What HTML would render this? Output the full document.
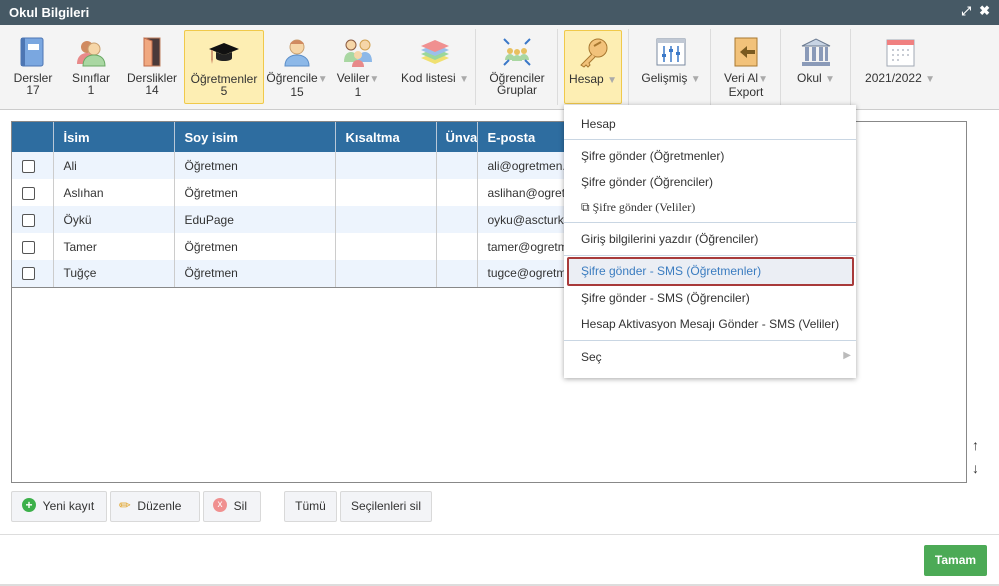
<!DOCTYPE html>
<html><head><meta charset="utf-8"><style>
*{box-sizing:border-box;margin:0;padding:0}
body{width:999px;height:586px;overflow:hidden;background:#fff;font-family:"Liberation Sans",Arial,sans-serif;font-size:12px;color:#333;position:relative}
.a{position:absolute}
.title{left:0;top:0;width:999px;height:25px;background:#465965;color:#fff;font-weight:bold;font-size:13px;padding:5px 0 0 9px}
.tb{left:0;top:25px;width:999px;height:85px;background:#f4f4f4;border-bottom:1px solid #ccc}
.it{position:absolute;top:5px;height:74px;text-align:center;font-size:12px;color:#333;line-height:12px}
.it .lb{position:absolute;top:42px;left:0;right:0}
.it svg{position:absolute;top:6px;left:50%;margin-left:-16px}
.sel{background:#fdeeb3;border:1px solid #f0c94a;border-radius:2px}
.sep{position:absolute;top:4px;width:1px;height:76px;background:#dcdcdc}
.arr{color:#aaa;font-size:10px}
table{border-collapse:collapse;table-layout:fixed}
.grid{left:11px;top:121px;width:956px;height:362px;border:1px solid #888}
th{background:#2e6da0;color:#fff;text-align:left;font-size:13px;height:30px;padding-left:10px;font-weight:bold;border-right:1px solid #b8c8d8;white-space:nowrap;overflow:hidden}
td{height:27px;padding-left:10px;border-right:1px solid #ccc;font-size:12px;color:#333;white-space:nowrap;overflow:hidden}
tr.o td{background:#edf4fd}
.cb{display:inline-block;width:13px;height:13px;border:1px solid #555;border-radius:2px;background:#fff;vertical-align:middle}
.dd{left:564px;top:105px;width:292px;height:273px;background:#fff;box-shadow:0 1px 5px rgba(0,0,0,.35);font-size:12px;color:#333}
.dd .m{position:absolute;left:17px}
.dd .hr{position:absolute;left:0;width:292px;height:1px;background:#c9d6e3}
.btn{position:absolute;top:491px;height:31px;background:#f3f4f7;border:1px solid #d9d9d9;border-radius:2px;font-size:12px;color:#333;line-height:29px}
</style></head><body>
<div class="a title">Okul Bilgileri<span style="position:absolute;right:28px;top:4px;font-size:12px">⤢</span><span style="position:absolute;right:9px;top:3px;font-size:13px">✖</span></div>
<div class="a tb">
 <div class="it" style="left:5px;width:56px"><svg width="32" height="32"><rect x="4" y="2" width="22" height="28" rx="2" fill="#7aa7e0" stroke="#4d76b3"/><rect x="4" y="2" width="4" height="28" fill="#4d76b3"/><rect x="11" y="8" width="11" height="6" fill="#fff"/></svg><div class="lb">Dersler<br>17</div></div>
 <div class="it" style="left:64px;width:54px"><svg width="32" height="32"><circle cx="12" cy="11" r="6" fill="#d08a60"/><path d="M2 28c0-8 5-11 10-11s10 3 10 11z" fill="#e88a8a"/><circle cx="19" cy="13" r="6" fill="#f6d6a8" stroke="#c9a070"/><path d="M8 30c0-8 5-11 11-11s11 3 11 11z" fill="#a9d7a2" stroke="#6aa864"/></svg><div class="lb">Sınıflar<br>1</div></div>
 <div class="it" style="left:122px;width:60px"><svg width="32" height="32"><rect x="8" y="2" width="16" height="28" fill="#4a3a3a" stroke="#c08060"/><path d="M8 2l8 3v25l-8-0z" fill="#f0a880" stroke="#c06b4a"/></svg><div class="lb">Derslikler<br>14</div></div>
 <div class="it sel" style="left:184px;top:5px;width:80px"><svg width="32" height="32"><path d="M1 12l15-6 15 6-15 6z" fill="#111"/><path d="M8 15v6c0 2 4 3 8 3s8-1 8-3v-6l-8 3z" fill="#222"/><path d="M4 13v9" stroke="#c08060" stroke-width="1.5"/><path d="M3 22l1 5 1-5z" fill="#d08c6a"/></svg><div class="lb">Öğretmenler<br>5</div></div>
 <div class="it" style="left:266px;width:62px"><svg width="32" height="32"><circle cx="16" cy="11" r="7" fill="#f6d6a8" stroke="#c9a070"/><path d="M9 8c2-5 12-5 14 0" fill="#d08a60"/><path d="M4 30c0-8 6-11 12-11s12 3 12 11z" fill="#8cb8e8" stroke="#5b8ec8"/></svg><div class="lb">Öğrencile<span class="arr">▼</span><br>15</div></div>
 <div class="it" style="left:334px;width:48px"><svg width="32" height="32"><circle cx="9" cy="9" r="5" fill="#f6d6a8" stroke="#8a5a40"/><path d="M2 26c0-7 3-10 7-10s7 3 7 10z" fill="#a9d7a2"/><circle cx="23" cy="9" r="5" fill="#f6d6a8" stroke="#d0a050"/><path d="M16 26c0-7 3-10 7-10s7 3 7 10z" fill="#8cb8e8"/><circle cx="16" cy="19" r="4" fill="#f6d6a8"/><path d="M10 31c0-5 3-7 6-7s6 2 6 7z" fill="#e88a8a"/></svg><div class="lb">Veliler<span class="arr">▼</span><br>1</div></div>
 <div class="it" style="left:395px;width:80px"><svg width="32" height="32"><path d="M2 22l14 6 14-6-14-6z" fill="#f0e070"/><path d="M2 18l14 6 14-6-14-6z" fill="#9bd79b"/><path d="M2 14l14 6 14-6-14-6z" fill="#9ac0ea"/><path d="M2 10l14 6 14-6-14-6z" fill="#f09090"/></svg><div class="lb">Kod listesi <span class="arr">▼</span></div></div>
 <div class="sep" style="left:475px"></div>
 <div class="it" style="left:480px;width:74px"><svg width="32" height="32"><circle cx="9" cy="15" r="3" fill="#e8c060"/><circle cx="16" cy="16" r="3" fill="#e8c060"/><circle cx="23" cy="15" r="3" fill="#e8c060"/><path d="M4 24c0-4 3-6 5-6s5 2 5 6zM11 25c0-4 3-6 5-6s5 2 5 6zM18 24c0-4 3-6 5-6s5 2 5 6z" fill="#a9d7a2"/><path d="M3 3l5 5M29 3l-5 5M3 29l5-5M29 29l-5-5" stroke="#3a78c8" stroke-width="2"/></svg><div class="lb">Öğrenciler<br>Gruplar</div></div>
 <div class="sep" style="left:557px"></div>
 <div class="it sel" style="left:564px;width:58px"><svg width="32" height="32"><circle cx="21" cy="11" r="9" fill="#f2c27a" stroke="#a87830"/><path d="M15 17L4 28l3 2 2-2 2 2 2-2-1-2 6-6" fill="#f2c27a" stroke="#a87830"/><path d="M17 9l7-4" stroke="#a87830" stroke-width="2"/></svg><div class="lb">Hesap <span class="arr">▼</span></div></div>
 <div class="sep" style="left:628px"></div>
 <div class="it" style="left:636px;width:70px"><svg width="32" height="32"><rect x="2" y="3" width="28" height="26" fill="#fff" stroke="#7a8aa0"/><rect x="2" y="3" width="28" height="4" fill="#c0c8d4"/><path d="M9 10v16M16 10v16M23 10v16" stroke="#3a78c8" stroke-width="1.5"/><rect x="7" y="18" width="4" height="3" fill="#3a78c8"/><rect x="14" y="13" width="4" height="3" fill="#3a78c8"/><rect x="21" y="16" width="4" height="3" fill="#3a78c8"/></svg><div class="lb">Gelişmiş <span class="arr">▼</span></div></div>
 <div class="sep" style="left:710px"></div>
 <div class="it" style="left:716px;width:60px"><svg width="32" height="32"><rect x="5" y="2" width="22" height="28" fill="#f2c27a" stroke="#a87830"/><path d="M10 16l7-6v4h8v4h-8v4z" fill="#7a5a20"/></svg><div class="lb">Veri Al<span class="arr">▼</span><br>Export</div></div>
 <div class="sep" style="left:780px"></div>
 <div class="it" style="left:786px;width:60px"><svg width="32" height="32"><path d="M2 10L16 3l14 7z" fill="#c8d4e4" stroke="#6a7a90"/><rect x="5" y="11" width="4" height="14" fill="#8a9ab8"/><rect x="12" y="11" width="4" height="14" fill="#8a9ab8"/><rect x="19" y="11" width="4" height="14" fill="#8a9ab8"/><rect x="25" y="11" width="3" height="14" fill="#8a9ab8"/><rect x="2" y="26" width="28" height="4" fill="#8a9ab8"/></svg><div class="lb">Okul <span class="arr">▼</span></div></div>
 <div class="sep" style="left:850px"></div>
 <div class="it" style="left:858px;width:84px"><svg width="32" height="32"><rect x="3" y="4" width="27" height="26" fill="#fff" stroke="#a0a8b4"/><rect x="3" y="4" width="27" height="5" fill="#f08080"/><g fill="#c8ccd4"><rect x="8" y="13" width="2" height="2"/><rect x="13" y="13" width="2" height="2"/><rect x="18" y="13" width="2" height="2"/><rect x="23" y="13" width="2" height="2"/><rect x="8" y="18" width="2" height="2"/><rect x="13" y="18" width="2" height="2"/><rect x="18" y="18" width="2" height="2"/><rect x="23" y="18" width="2" height="2"/><rect x="8" y="23" width="2" height="2"/><rect x="13" y="23" width="2" height="2"/></g></svg><div class="lb">2021/2022 <span class="arr">▼</span></div></div>
</div>
<div class="a grid">
<table style="width:615px"><tr><th style="width:41px"></th><th style="width:121px">İsim</th><th style="width:161px">Soy isim</th><th style="width:101px">Kısaltma</th><th style="width:41px;padding-left:9px">Ünvan</th><th>E-posta</th></tr>
<tr class="o"><td><span class="cb"></span></td><td>Ali</td><td>Öğretmen</td><td></td><td></td><td>ali@ogretmen...</td></tr>
<tr><td><span class="cb"></span></td><td>Aslıhan</td><td>Öğretmen</td><td></td><td></td><td>aslihan@ogretmen</td></tr>
<tr class="o"><td><span class="cb"></span></td><td>Öykü</td><td>EduPage</td><td></td><td></td><td>oyku@ascturkiye</td></tr>
<tr><td><span class="cb"></span></td><td>Tamer</td><td>Öğretmen</td><td></td><td></td><td>tamer@ogretmen</td></tr>
<tr class="o"><td style="border-bottom:1px solid #888"><span class="cb"></span></td><td style="border-bottom:1px solid #888">Tuğçe</td><td style="border-bottom:1px solid #888">Öğretmen</td><td style="border-bottom:1px solid #888"></td><td style="border-bottom:1px solid #888"></td><td style="border-bottom:1px solid #888">tugce@ogretmen</td></tr>
</table></div>
<div class="a" style="left:972px;top:437px;font-size:14px;font-weight:bold">↑</div>
<div class="a" style="left:972px;top:460px;font-size:14px;font-weight:bold">↓</div>
<div class="a dd">
 <div class="m" style="top:12px">Hesap</div>
 <div class="hr" style="top:34px"></div>
 <div class="m" style="top:44px">Şifre gönder (Öğretmenler)</div>
 <div class="m" style="top:70px">Şifre gönder (Öğrenciler)</div>
 <div class="m" style="top:95px;font-family:'Liberation Serif',serif">⧉ Şifre gönder (Veliler)</div>
 <div class="hr" style="top:117px"></div>
 <div class="m" style="top:127px">Giriş bilgilerini yazdır (Öğrenciler)</div>
 <div class="hr" style="top:150px"></div>
 <div style="position:absolute;left:3px;top:152px;width:287px;height:29px;border:2px solid #a83a3a;background:#ebeef4;border-radius:2px"></div>
 <div class="m" style="top:159px;color:#3a7cc0">Şifre gönder - SMS (Öğretmenler)</div>
 <div class="m" style="top:186px">Şifre gönder - SMS (Öğrenciler)</div>
 <div class="m" style="top:212px">Hesap Aktivasyon Mesajı Gönder - SMS (Veliler)</div>
 <div class="hr" style="top:235px"></div>
 <div class="m" style="top:245px">Seç</div>
 <div style="position:absolute;right:5px;top:245px;color:#bbb;font-size:10px">▶</div>
</div>
<div class="btn" style="left:11px;width:96px;padding-left:10px"><span style="display:inline-block;width:14px;height:14px;border-radius:50%;background:#3cb04a;color:#fff;text-align:center;line-height:14px;font-weight:bold;font-size:12px;vertical-align:middle;margin-top:-3px">+</span> &nbsp;Yeni kayıt</div>
<div class="btn" style="left:110px;width:90px;padding-left:8px"><span style="color:#e0a020;font-size:14px;line-height:12px">✏</span> &nbsp;Düzenle</div>
<div class="btn" style="left:203px;width:58px;padding-left:9px"><span style="display:inline-block;width:14px;height:14px;border-radius:50%;background:#f09090;color:#fff;text-align:center;line-height:13px;font-size:10px;vertical-align:middle;margin-top:-3px">x</span> &nbsp;Sil</div>
<div class="btn" style="left:284px;width:53px;text-align:center">Tümü</div>
<div class="btn" style="left:340px;width:92px;text-align:center">Seçilenleri sil</div>
<div class="a" style="left:0;top:534px;width:999px;height:1px;background:#ddd"></div>
<div class="a" style="left:0;top:584px;width:999px;height:2px;background:#ddd"></div>
<div class="a" style="left:924px;top:545px;width:63px;height:31px;background:#4caa56;border-radius:2px;color:#fff;font-weight:bold;text-align:center;padding-top:8px">Tamam</div>
</body></html>
